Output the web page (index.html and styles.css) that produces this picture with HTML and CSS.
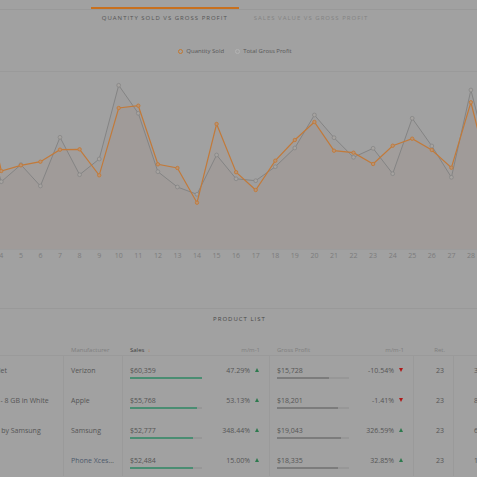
FILE: index.html
```html
<!DOCTYPE html>
<html lang="en">
<head>
<meta charset="utf-8">
<title>Sales dashboard</title>
<link rel="stylesheet" href="styles.css">
</head>
<body>
<nav class="tabbar">
  <div class="tab active">Quantity Sold vs Gross Profit</div>
  <div class="tab">Sales Value vs Gross Profit</div>
</nav>
<div class="legend">
  <span class="legend-item"><span class="dot dot-orange"></span>Quantity Sold</span>
  <span class="legend-item"><span class="dot dot-gray"></span>Total Gross Profit</span>
</div>
<svg class="chart" viewBox="0 62 477 200" width="477" height="200">
  <defs>
    <marker id="mo" viewBox="-3 -3 6 6" markerWidth="6" markerHeight="6" refX="0" refY="0" markerUnits="userSpaceOnUse"><circle r="1.7" class="mk-o"/></marker>
    <marker id="mg" viewBox="-3 -3 6 6" markerWidth="6" markerHeight="6" refX="0" refY="0" markerUnits="userSpaceOnUse"><circle r="1.9" class="mk-g"/></marker>
  </defs>
  <line class="grid" x1="0" y1="71.5" x2="477" y2="71.5"/>
  <polygon class="area-g" points="-18.3,250 -18.3,117 1.3,181.7 20.9,164.7 40.4,186 60,137.3 79.6,174.7 99.2,159 118.7,85.3 138.3,113.3 157.9,171.7 177.4,187 197,194.3 216.6,155 236.1,178.8 255.7,180.7 275.3,166.7 294.8,148 314.4,115 334,137.7 353.5,157.3 373.1,148.3 392.7,173.7 412.2,118.3 431.8,146 451.4,177.3 470.9,90 490.5,167 490.5,250"/>
  <polygon class="area-o" points="-18.3,250 -18.3,81 1.3,171 20.9,165.3 40.4,161.7 60,149.7 79.6,149.3 99.2,175.3 118.7,108 138.3,105.7 157.9,164.3 177.4,168 197,202.7 216.6,124 236.1,172.2 255.7,190 275.3,160.7 294.8,140 314.4,122 334,150.7 353.5,152.7 373.1,164 392.7,145.7 412.2,138.7 431.8,150 451.4,167.7 470.9,102.3 490.5,180 490.5,250"/>
  <line class="axis" x1="0" y1="249.5" x2="477" y2="249.5"/>
  <polyline class="line-g" marker-start="url(#mg)" marker-mid="url(#mg)" marker-end="url(#mg)" points="-18.3,117 1.3,181.7 20.9,164.7 40.4,186 60,137.3 79.6,174.7 99.2,159 118.7,85.3 138.3,113.3 157.9,171.7 177.4,187 197,194.3 216.6,155 236.1,178.8 255.7,180.7 275.3,166.7 294.8,148 314.4,115 334,137.7 353.5,157.3 373.1,148.3 392.7,173.7 412.2,118.3 431.8,146 451.4,177.3 470.9,90 490.5,167"/>
  <polyline class="line-o" marker-start="url(#mo)" marker-mid="url(#mo)" marker-end="url(#mo)" points="-18.3,81 1.3,171 20.9,165.3 40.4,161.7 60,149.7 79.6,149.3 99.2,175.3 118.7,108 138.3,105.7 157.9,164.3 177.4,168 197,202.7 216.6,124 236.1,172.2 255.7,190 275.3,160.7 294.8,140 314.4,122 334,150.7 353.5,152.7 373.1,164 392.7,145.7 412.2,138.7 431.8,150 451.4,167.7 470.9,102.3 490.5,180"/>
  <g class="xlabels">
    <text x="1.3" y="258">4</text>
    <text x="20.9" y="258">5</text>
    <text x="40.4" y="258">6</text>
    <text x="60" y="258">7</text>
    <text x="79.6" y="258">8</text>
    <text x="99.2" y="258">9</text>
    <text x="118.7" y="258">10</text>
    <text x="138.3" y="258">11</text>
    <text x="157.9" y="258">12</text>
    <text x="177.4" y="258">13</text>
    <text x="197" y="258">14</text>
    <text x="216.6" y="258">15</text>
    <text x="236.1" y="258">16</text>
    <text x="255.7" y="258">17</text>
    <text x="275.3" y="258">18</text>
    <text x="294.8" y="258">19</text>
    <text x="314.4" y="258">20</text>
    <text x="334" y="258">21</text>
    <text x="353.5" y="258">22</text>
    <text x="373.1" y="258">23</text>
    <text x="392.7" y="258">24</text>
    <text x="412.2" y="258">25</text>
    <text x="431.8" y="258">26</text>
    <text x="451.4" y="258">27</text>
    <text x="470.9" y="258">28</text>
  </g>
</svg>
<section class="products">
  <h2 class="section-title">Product List</h2>
  <div class="table-wrap">
    <table class="ptable">
      <colgroup>
        <col class="c-name"><col class="c-man"><col class="c-sales"><col class="c-mm1"><col class="c-gp"><col class="c-mm2"><col class="c-ret"><col class="c-units">
      </colgroup>
      <thead>
        <tr>
          <th>Product</th>
          <th>Manufacturer</th>
          <th class="sorted">Sales <span class="sort">↓</span></th>
          <th class="right">m/m-1</th>
          <th>Gross Profit</th>
          <th class="right">m/m-1</th>
          <th class="right ret">Ret.</th>
          <th class="units"></th>
        </tr>
      </thead>
      <tbody>
        <tr>
          <td class="br">Verizon Ellipsis 8 Android 4G Tablet</td>
          <td class="br">Verizon</td>
          <td><div>$60,359</div><div class="bar"><span class="fill green" style="width:100%"></span></div></td>
          <td class="right mm br">47.29%<span class="tri up"></span></td>
          <td><div>$15,728</div><div class="bar"><span class="fill gray" style="width:72.8%"></span></div></td>
          <td class="right mm br">-10.54%<span class="tri down"></span></td>
          <td class="right ret br">23</td>
          <td class="units">3,412</td>
        </tr>
        <tr>
          <td class="br">Apple iPod touch 5th Generation - 8 GB in White</td>
          <td class="br">Apple</td>
          <td><div>$55,768</div><div class="bar"><span class="fill green" style="width:92.4%"></span></div></td>
          <td class="right mm br">53.13%<span class="tri up"></span></td>
          <td><div>$18,201</div><div class="bar"><span class="fill gray" style="width:84.3%"></span></div></td>
          <td class="right mm br">-1.41%<span class="tri down"></span></td>
          <td class="right ret br">23</td>
          <td class="units">8,305</td>
        </tr>
        <tr>
          <td class="br">Galaxy Note 10.1 Wi-Fi + 4GB LTE by Samsung</td>
          <td class="br">Samsung</td>
          <td><div>$52,777</div><div class="bar"><span class="fill green" style="width:87.4%"></span></div></td>
          <td class="right mm br">348.44%<span class="tri up"></span></td>
          <td><div>$19,043</div><div class="bar"><span class="fill gray" style="width:88.2%"></span></div></td>
          <td class="right mm br">326.59%<span class="tri up"></span></td>
          <td class="right ret br">23</td>
          <td class="units">6,918</td>
        </tr>
        <tr>
          <td class="br">Lightning Charger</td>
          <td class="br"><span class="link">Phone Xcessories</span></td>
          <td><div>$52,484</div><div class="bar"><span class="fill green" style="width:87%"></span></div></td>
          <td class="right mm br">15.00%<span class="tri up"></span></td>
          <td><div>$18,335</div><div class="bar"><span class="fill gray" style="width:84.9%"></span></div></td>
          <td class="right mm br">32.85%<span class="tri up"></span></td>
          <td class="right ret br">23</td>
          <td class="units">1,207</td>
        </tr>
      </tbody>
    </table>
  </div>
</section>
</body>
</html>
```

FILE: styles.css
```css
html, body {
  margin: 0;
  padding: 0;
}

body {
  width: 477px;
  height: 477px;
  overflow: hidden;
  background: #a1a1a1;
  font-family: "Open Sans", "Liberation Sans", sans-serif;
  color: #555;
}

/* Tabs */
.tabbar {
  display: flex;
  justify-content: center;
  gap: 4px;
  margin-top: 7px;
  padding-right: 7px;
  background: linear-gradient(#999, #999) 0 2px / 100% 1px no-repeat;
}

.tab {
  border-top: 2px solid transparent;
  padding: 5px 11px 5px 11px;
  font-size: 6px;
  line-height: 9px;
  letter-spacing: 1px;
  text-transform: uppercase;
  color: #838383;
}

.tab.active {
  border-top-color: #c8701e;
  color: #555;
}

/* Legend */
.legend {
  display: flex;
  justify-content: center;
  gap: 11px;
  margin-top: 19px;
  padding-right: 7px;
  font-size: 6px;
  line-height: 8px;
  color: #585858;
}

.legend-item {
  display: flex;
  align-items: center;
  gap: 3px;
}

.dot {
  width: 3px;
  height: 3px;
  border-radius: 50%;
  border: 1px solid;
}

.dot-orange { border-color: #c4782f; }
.dot-gray { border-color: #b3b3b3; }

/* Chart */
.chart {
  display: block;
  margin-top: 7px;
}

.grid { stroke: #9a9a9a; stroke-width: 1; }
.axis { stroke: #9c9c9c; stroke-width: 1; }

.area-g { fill: #8a7a70; opacity: 0.06; }
.area-o { fill: #b08060; opacity: 0.08; }

.line-g { fill: none; stroke: #848484; stroke-width: 1; }
.line-o { fill: none; stroke: #c27a3a; stroke-width: 1.2; }

.mk-o { fill: #b89272; stroke: #c27a3a; stroke-width: 0.9; }
.mk-g { fill: #a6a3a0; stroke: #868686; stroke-width: 0.8; }

.xlabels text {
  font-family: "Open Sans", "Liberation Sans", sans-serif;
  font-size: 7px;
  fill: #7b7b7b;
  text-anchor: middle;
}

/* Product list */
.products {
  margin-top: 46px;
  border-top: 1px solid #999;
}

.section-title {
  margin: 0;
  padding-top: 6px;
  padding-left: 2px;
  font-size: 6px;
  line-height: 8px;
  font-weight: 400;
  letter-spacing: 1px;
  text-transform: uppercase;
  text-align: center;
  color: #484848;
}

.table-wrap {
  margin-top: 19px;
  margin-left: -115px;
}

.ptable {
  border-collapse: separate;
  border-spacing: 0;
  table-layout: fixed;
  width: 655px;
}

.c-name { width: 179px; }
.c-man { width: 59px; }
.c-sales { width: 87px; }
.c-mm1 { width: 60px; }
.c-gp { width: 82px; }
.c-mm2 { width: 62px; }
.c-ret { width: 40px; }
.c-units { width: 86px; }

.ptable th {
  padding: 4px 7px 1px;
  border-bottom: 1px solid #9a9a9a;
  font-size: 6px;
  line-height: 8px;
  font-weight: 400;
  text-align: left;
  color: #7e7e7e;
  white-space: nowrap;
  overflow: hidden;
}

.ptable th.sorted { color: #3c3c3c; }

.sort {
  margin-left: 2px;
  color: #c8701e;
  font-size: 5px;
}

.ptable td {
  padding: 10px 7px 7px;
  font-size: 7px;
  line-height: 9px;
  vertical-align: top;
  white-space: nowrap;
  overflow: hidden;
  text-overflow: ellipsis;
  color: #555;
}

.ptable .right { text-align: right; padding-right: 10px; }
.ptable .ret { padding-right: 9px; }
.ptable td.units { padding-left: 20px; }

.ptable td.br { border-right: 1px solid #9a9a9a; }

.link { color: #4d5a6c; }

.bar {
  margin-top: 2px;
  width: 72px;
  height: 2px;
  background: #979797;
}

.fill {
  display: block;
  height: 2px;
}

.fill.green { background: #4a8d72; }
.fill.gray { background: #7c7c7c; }

.tri {
  display: inline-block;
  width: 0;
  height: 0;
  margin-left: 5px;
  border-left: 2.5px solid transparent;
  border-right: 2.5px solid transparent;
  vertical-align: 1px;
}

.tri.up { border-bottom: 4px solid #2d7a4e; }
.tri.down { border-top: 4px solid #b01818; }
```
